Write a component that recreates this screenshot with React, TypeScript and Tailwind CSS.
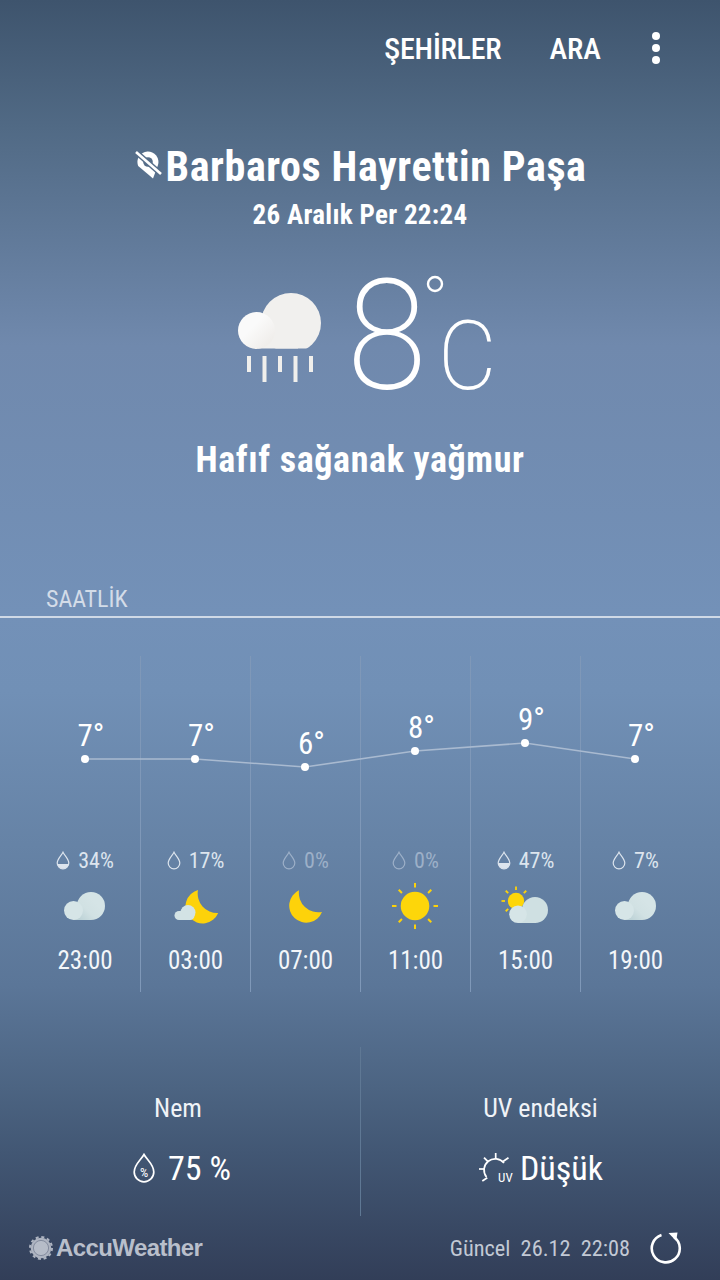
const font = { fontFamily: '"Roboto", "Liberation Sans", sans-serif' };

function CloudShape({ id, big, small, bottom }: { id: string; big: [number, number, number]; small: [number, number, number]; bottom: number }) {
  const [bx, by, br] = big;
  const [sx, sy, sr] = small;
  return (
    <g>
      <defs>
        <linearGradient id={id} gradientUnits="userSpaceOnUse" x1={sx + sr - 4} y1={bottom - 2} x2={bx + 4} y2={by - 4}>
          <stop offset="0" stopColor="#bed3d7" />
          <stop offset="0.5" stopColor="#d1e1e3" />
          <stop offset="1" stopColor="#d5e4e6" />
        </linearGradient>
      </defs>
      <circle cx={bx} cy={by} r={br} fill={`url(#${id})`} />
      <rect x={sx} y={bottom - 10} width={bx - sx} height={10} fill={`url(#${id})`} />
      <circle cx={sx} cy={sy} r={sr} fill="#d6e5e7" />
    </g>
  );
}

function SmallCloud({ id }: { id: string }) {
  return (
    <svg viewBox="0 0 44 30" className="mt-[1px] h-[30px] w-[44px]">
      <CloudShape id={id} big={[28, 14, 14]} small={[10.5, 18.5, 9.5]} bottom={28} />
    </svg>
  );
}

function Moon({ cloud }: { cloud?: boolean }) {
  if (cloud) {
    return (
      <svg viewBox="172 886 48 38" className="h-[38px] w-[48px]">
        <path d="M198 889 A17 17 0 1 0 218.2 912 A19.5 19.5 0 0 1 198 889 Z" fill="#fdd20a" />
        <circle cx="188" cy="911.5" r="7.5" fill="#d3e3e5" />
        <rect x="174.5" y="910" width="20" height="9" rx="4.5" fill="#d3e3e5" />
      </svg>
    );
  }
  return (
    <svg viewBox="286 888 38 38" className="h-[38px] w-[38px]">
      <path d="M298 891.3 A17 17 0 1 0 321 913 A19.5 19.5 0 0 1 298 891.3 Z" fill="#fdd20a" />
    </svg>
  );
}

function Rays({ cx, cy, r1, r2, w }: { cx: number; cy: number; r1: number; r2: number; w: number }) {
  return (
    <g stroke="#fdd20a" strokeWidth={w}>
      {[0, 45, 90, 135, 180, 225, 270, 315].map((a) => {
        const t = (a * Math.PI) / 180;
        return (
          <line
            key={a}
            x1={cx + r1 * Math.cos(t)}
            y1={cy + r1 * Math.sin(t)}
            x2={cx + r2 * Math.cos(t)}
            y2={cy + r2 * Math.sin(t)}
          />
        );
      })}
    </g>
  );
}

function Sun() {
  return (
    <svg viewBox="0 0 48 48" className="mr-[1px] h-[48px] w-[48px]">
      <circle cx="24" cy="24" r="14.3" fill="#fdd60a" />
      <Rays cx={24} cy={24} r1={18.5} r2={23} w={2} />
    </svg>
  );
}

function SunCloud() {
  return (
    <svg viewBox="500 886 50 40" className="mb-[3px] h-[40px] w-[50px]">
      <circle cx="515" cy="902" r="8.2" fill="#fdd60a" />
      <Rays cx={515} cy={902} r1={11} r2={14.5} w={1.8} />
      <circle cx="534" cy="911" r="13" fill="#cfe0e2" />
      <rect x="517" y="914" width="18" height="10" fill="#cfe0e2" />
      <circle cx="517" cy="915.2" r="8.8" fill="#d6e5e7" />
    </svg>
  );
}

function Drop({ fill }: { fill: number }) {
  const id = `drop-${fill}`;
  return (
    <svg viewBox="0 0 14 19" className="h-[19px] w-[14px]">
      <defs>
        <clipPath id={id}>
          <rect x="0" y={18 - fill} width="14" height={fill + 1} />
        </clipPath>
      </defs>
      <path d="M7 1.2 C5.5 4.5 1.2 8 1.2 12 A5.8 5.8 0 0 0 12.8 12 C12.8 8 8.5 4.5 7 1.2 Z" fill="none" stroke="currentColor" strokeWidth="1.2" />
      {fill > 0 && (
        <path d="M7 1.2 C5.5 4.5 1.2 8 1.2 12 A5.8 5.8 0 0 0 12.8 12 C12.8 8 8.5 4.5 7 1.2 Z" fill="currentColor" clipPath={`url(#${id})`} />
      )}
    </svg>
  );
}

const hours = [
  { t: '7°', y: 759, rain: '34%', fill: 5, dim: false, icon: <SmallCloud id="c1" />, time: '23:00' },
  { t: '7°', y: 759, rain: '17%', fill: 0, dim: false, icon: <Moon cloud />, time: '03:00' },
  { t: '6°', y: 767, rain: '0%', fill: 0, dim: true, icon: <Moon />, time: '07:00' },
  { t: '8°', y: 751, rain: '0%', fill: 0, dim: true, icon: <Sun />, time: '11:00' },
  { t: '9°', y: 743, rain: '47%', fill: 6, dim: false, icon: <SunCloud />, time: '15:00' },
  { t: '7°', y: 759, rain: '7%', fill: 0, dim: false, icon: <SmallCloud id="c2" />, time: '19:00' },
];

export default function App() {
  const pts = hours.map((h, i) => [55 + i * 110, h.y - 656]);
  return (
    <div
      style={font}
      className="flex h-[1280px] w-[720px] flex-col overflow-hidden bg-[linear-gradient(180deg,#3e546d_0%,#516a85_10%,#7089ad_27%,#7391b8_48%,#7190b6_54%,#6683a6_66%,#5b7698_77%,#4c6482_85%,#425774_90%,#323e58_100%)] text-white [font-stretch:86%]"
    >
      {/* top bar */}
      <div className="flex h-[96px] items-center justify-end pr-[58px] text-[30px] font-medium">
        <span className="mr-[48px] whitespace-nowrap tracking-[-0.2px]">ŞEHİRLER</span>
        <span className="mr-[49px]">ARA</span>
        <svg viewBox="0 0 12 36" className="h-[36px] w-[12px]">
          <circle cx="6" cy="6" r="4" fill="#fff" />
          <circle cx="6" cy="18" r="4" fill="#fff" />
          <circle cx="6" cy="30" r="4" fill="#fff" />
        </svg>
      </div>

      {/* place */}
      <div className="mt-[46px] flex h-[50px] items-center justify-center pl-[2px]">
        <svg viewBox="0 0 28 31" className="mr-[2px] mb-[4px] h-[31px] w-[28px]">
          <path d="M3.2 16 A10.5 10.5 0 1 1 23 15 L18 28.5 Z" fill="#fff" />
          <circle cx="13" cy="12" r="4.8" fill="#566e89" />
          <line x1="1" y1="2" x2="26" y2="24" stroke="#566e89" strokeWidth="5.5" />
          <line x1="1" y1="2" x2="26" y2="24" stroke="#fff" strokeWidth="2.6" />
        </svg>
        <span className="whitespace-nowrap text-[42px] font-bold leading-none tracking-[0.6px]">Barbaros Hayrettin Paşa</span>
      </div>
      <div className="mt-[7px] text-center text-[27px] font-bold leading-[32px] tracking-[0.3px]">26 Aralık Per 22:24</div>

      {/* current */}
      <div className="mt-[32px] flex h-[146px] items-center justify-center pl-[18px]">
        <svg viewBox="237 293 83 90" className="mt-[4px] mr-[21px] h-[90px] w-[83px]">
          <defs>
            <linearGradient id="small" x1="0" y1="0" x2="1" y2="1">
              <stop offset="0.4" stopColor="#fafafa" />
              <stop offset="1" stopColor="#ece9e5" />
            </linearGradient>
            <clipPath id="bigclip">
              <rect x="237" y="290" width="90" height="58.5" />
            </clipPath>
          </defs>
          <circle cx="290" cy="323" r="30" fill="#f1f0ee" clipPath="url(#bigclip)" />
          <rect x="257" y="330" width="40" height="18.5" fill="#f1f0ee" />
          <circle cx="255.5" cy="330.5" r="18.5" fill="url(#small)" />
          <g fill="#f0efec">
            <rect x="246" y="356" width="4" height="16" />
            <rect x="261.5" y="356" width="4" height="26" />
            <rect x="277" y="356" width="4" height="16" />
            <rect x="292.5" y="356" width="4" height="26" />
            <rect x="308" y="356" width="4" height="16" />
          </g>
        </svg>
        <div className="flex h-[146px] items-start [font-stretch:100%]">
          <span className="mt-[1px] origin-right scale-x-[0.945] text-[154px] font-extralight leading-[146px]">8</span>
          <div className="relative ml-[12px]">
            <svg viewBox="0 0 18 18" className="absolute top-[12px] left-[-12px] h-[18px] w-[18px]">
              <circle cx="9" cy="9" r="7" fill="none" stroke="#fff" strokeWidth="2.4" />
            </svg>
            <span className="mt-[51px] block origin-left scale-x-[0.94] text-[96px] font-extralight leading-[84px]">C</span>
          </div>
        </div>
      </div>

      <div className="mt-[29px] text-center text-[36px] font-bold leading-[44px] tracking-[0.65px]">Hafıf sağanak yağmur</div>

      {/* hourly label */}
      <div className="mt-[104px] pl-[46px] text-[24px] leading-[26px] text-[#d3dce8]">SAATLİK</div>
      <div className="mt-[4px] h-[2px] bg-[#cfd9e6]" />

      {/* hourly grid */}
      <div className="relative mx-[30px] mt-[38px] grid h-[336px] grid-cols-6">
        <svg viewBox="0 0 660 190" className="absolute top-0 left-0 h-[190px] w-[660px]">
          <polyline points={pts.map((p) => p.join(',')).join(' ')} fill="none" stroke="#a9bad0" strokeWidth="1.6" />
          {pts.map((p, i) => (
            <circle key={i} cx={p[0]} cy={p[1]} r="4" fill="#fff" />
          ))}
        </svg>
        {hours.map((h, i) => (
          <div key={h.time} className={`flex flex-col items-center ${i > 0 ? 'border-l border-[#7f98b8]' : ''}`}>
            <div className="h-[190px] w-full">
              <div style={{ marginTop: h.y - 656 - 40 }} className="pl-[12px] text-center text-[31px] leading-[34px]">
                {h.t}
              </div>
            </div>
            <div className={`flex h-[28px] items-center gap-[8px] text-[22px] ${h.dim ? 'text-[#9db0c8]' : 'text-[#dde5ee]'}`}>
              <Drop fill={h.fill} />
              <span>{h.rain}</span>
            </div>
            <div className="mt-[6px] flex h-[52px] items-center justify-center">{h.icon}</div>
            <div className="mt-[13px] text-[25px] leading-[32px] text-[#f3f6f9]">{h.time}</div>
          </div>
        ))}
      </div>

      {/* details */}
      <div className="mt-[55px] grid h-[169px] grid-cols-2">
        <div className="flex flex-col items-center pl-[4px]">
          <div className="mt-[45px] mr-[8px] text-[26px] leading-[32px] text-[#f0f3f7]">Nem</div>
          <div className="mt-[24px] flex items-center gap-[13px]">
            <svg viewBox="0 0 22 30" className="h-[30px] w-[22px]">
              <path d="M11 1.5 C8 7 1.2 11.5 1.2 19 A9.8 9.8 0 0 0 20.8 19 C20.8 11.5 14 7 11 1.5 Z" fill="none" stroke="#fff" strokeWidth="1.7" />
              <text x="11" y="23.5" textAnchor="middle" fill="#fff" fontSize="13" fontFamily="Roboto, sans-serif">%</text>
            </svg>
            <span className="text-[34px] leading-[40px]">75 %</span>
          </div>
        </div>
        <div className="flex flex-col items-center border-l border-[#5f7894]">
          <div className="mt-[45px] text-[26px] leading-[32px] text-[#f0f3f7]">UV endeksi</div>
          <div className="mt-[24px] flex items-center gap-[4px]">
            <svg viewBox="0 0 38 32" className="h-[32px] w-[38px]">
              <path d="M26 11 A11 11 0 1 0 8.5 25" fill="none" stroke="#fff" strokeWidth="1.7" />
              <g stroke="#fff" strokeWidth="1.7">
                <line x1="17.7" y1="1" x2="17.7" y2="7" />
                <line x1="1" y1="17" x2="7" y2="17" />
                <line x1="6" y1="5.7" x2="10" y2="9.7" />
                <line x1="25" y1="9.5" x2="30.5" y2="5.7" />
                <line x1="4.3" y1="29" x2="9.3" y2="25.7" />
              </g>
              <text x="20" y="30" fill="#fff" fontSize="13" fontFamily="Roboto, sans-serif" letterSpacing="0.3">UV</text>
            </svg>
            <span className="text-[34px] leading-[40px]">Düşük</span>
          </div>
        </div>
      </div>

      {/* footer */}
      <div className="flex flex-1 items-center justify-between pr-[38px] pl-[29px]">
        <div className="flex items-center gap-[3px] text-[#b9bfcb]">
          <svg viewBox="0 0 24 24" className="h-[24px] w-[24px]">
            <circle cx="12" cy="12" r="10.3" fill="#aeb4c1" />
            <circle cx="12" cy="12" r="11" fill="none" stroke="#aeb4c1" strokeWidth="2" strokeDasharray="3 2.76" />
            <circle cx="12" cy="12" r="7.6" fill="#b6bcc8" stroke="#838b9e" strokeWidth="1" />
          </svg>
          <span style={{ fontFamily: '"Liberation Sans", sans-serif' }} className="text-[24px] font-bold leading-none tracking-[-0.6px]">AccuWeather</span>
        </div>
        <div className="flex items-center">
          <span className="mr-[20px] whitespace-nowrap text-[22.3px] leading-none text-[#c2c9d5]">Güncel&nbsp; 26.12&nbsp; 22:08</span>
          <svg viewBox="0 0 32 32" className="h-[32px] w-[32px]">
            <path d="M11.5 3 A14 14 0 1 0 24 5" fill="none" stroke="#fff" strokeWidth="2.6" />
            <path d="M18.5 1 L27.5 0.5 L26.2 9 Z" fill="#fff" />
          </svg>
        </div>
      </div>
    </div>
  );
}
